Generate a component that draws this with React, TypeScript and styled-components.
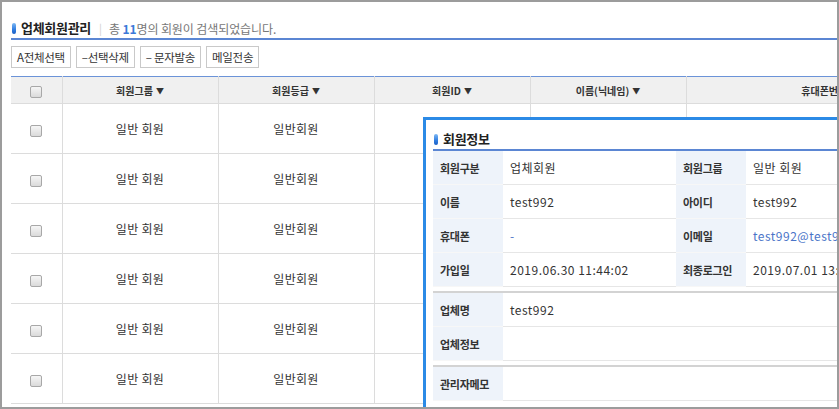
import React from "react";
import styled, { createGlobalStyle } from "styled-components";

const GlobalStyle = createGlobalStyle`
  html, body { margin: 0; padding: 0; background: #fff; }
  body { font-family: "Noto Sans CJK KR", "Noto Sans", sans-serif; color: #333; }
  * { box-sizing: border-box; }
`;

const Frame = styled.div`
  position: relative;
  width: 839px;
  height: 409px;
  border: 2px solid #9c9c9c;
  overflow: hidden;
  background: #fff;
`;

const Inner = styled.div`
  padding: 16px 0 0 9px;
`;

const TitleBar = styled.div`
  display: flex;
  align-items: center;
  height: 22px;
  border-bottom: 2px solid #5b86d3;
`;

const TitleIcon = styled.span`
  display: inline-block;
  width: 4px;
  height: 11px;
  margin: 0 5px 0 1px;
  border-radius: 2px;
  background: linear-gradient(180deg, #7db8f4 0%, #2f7ce0 60%, #1c5fc4 100%);
`;

const TitleText = styled.span<{ $size?: number }>`
  font-size: ${(p) => p.$size ?? 13}px;
  font-weight: 700;
  color: #222;
  line-height: 20px;
  letter-spacing: -0.3px;
`;

const Sep = styled.span`
  color: #cfcfcf;
  font-size: 11px;
  margin: 0 7px 0 8px;
`;

const CountText = styled.span`
  font-size: 12px;
  color: #777;
  letter-spacing: -0.1px;
`;

const Count = styled.b`
  color: #3b78d8;
`;

const ButtonRow = styled.div`
  display: flex;
  gap: 5px;
  margin-top: 6px;
`;

const ActionButton = styled.button`
  height: 22px;
  padding: 0 5px;
  border: 1px solid #c9c9c9;
  background: #fff;
  font-family: inherit;
  font-size: 11.5px;
  color: #333;
  letter-spacing: -0.3px;
  line-height: 20px;
  cursor: pointer;
`;

const Grid = styled.table`
  margin-top: 8px;
  width: 951px;
  table-layout: fixed;
  border-collapse: collapse;
  border-top: 1px solid #6b93d8;
`;

const HeadCell = styled.th<{ $w: number }>`
  width: ${(p) => p.$w}px;
  height: 27px;
  padding: 0;
  background: #f0f0f0;
  border-bottom: 1px solid #dcdcdc;
  border-left: 1px solid #dcdcdc;
  font-size: 10px;
  font-weight: 700;
  color: #333;
  text-align: center;
  white-space: nowrap;
  &:first-child { border-left: none; }
`;

const Arrow = styled.span`
  font-size: 8px;
  margin-left: 3px;
  vertical-align: 1px;
`;

const BodyCell = styled.td`
  height: 50px;
  padding: 0;
  border-bottom: 1px solid #dcdcdc;
  border-left: 1px solid #dcdcdc;
  font-size: 12px;
  color: #333;
  text-align: center;
  letter-spacing: 0.3px;
  &:first-child { border-left: none; }
`;

const Check = styled.span`
  display: inline-block;
  width: 12px;
  height: 12px;
  border: 1px solid #a8a8a8;
  border-radius: 2px;
  background: linear-gradient(180deg, #f6f6f6 0%, #dadada 100%);
  vertical-align: middle;
`;

const Popup = styled.div`
  position: absolute;
  left: 421px;
  top: 115px;
  width: 480px;
  height: 330px;
  border: 3px solid #2b8ae6;
  background: #fff;
  padding: 9px 0 0 7px;
`;

const InfoTable = styled.table<{ $sep?: boolean }>`
  width: 100%;
  table-layout: fixed;
  border-collapse: separate;
  border-spacing: 0;
  ${(p) => (p.$sep ? "margin-top: 4px; border-top: 2px solid #d3d3d3;" : "")}
`;

const LabelCell = styled.th`
  width: 70px;
  height: 34px;
  padding: 0 0 0 7px;
  background: #eef3fa;
  border-bottom: 1px solid #f7f7f7;
  font-size: 11px;
  font-weight: 700;
  color: #333;
  text-align: left;
  letter-spacing: -0.3px;
  white-space: nowrap;
`;

const ValueCell = styled.td<{ $w?: number; $link?: boolean }>`
  ${(p) => (p.$w ? `width: ${p.$w}px;` : "")}
  height: 34px;
  padding: 0 0 0 7px;
  background: #fff;
  border-bottom: 1px solid #e6e6e6;
  font-size: 12px;
  color: ${(p) => (p.$link ? "#4a74c8" : "#333")};
  white-space: nowrap;
  letter-spacing: 0.5px;
`;

const columns = [
  { w: 51, label: "" },
  { w: 156, label: "회원그룹" },
  { w: 156, label: "회원등급" },
  { w: 156, label: "회원ID" },
  { w: 156, label: "이름(닉네임)" },
  { w: 276, label: "휴대폰번호" },
];

const rows = Array.from({ length: 6 }, (_, i) => i);

export default function App() {
  return (
    <>
      <GlobalStyle />
      <Frame>
        <Inner>
          <TitleBar>
            <TitleIcon />
            <TitleText>업체회원관리</TitleText>
            <Sep>|</Sep>
            <CountText>
              총 <Count>11</Count>명의 회원이 검색되었습니다.
            </CountText>
          </TitleBar>
          <ButtonRow>
            <ActionButton>A전체선택</ActionButton>
            <ActionButton>–선택삭제</ActionButton>
            <ActionButton>– 문자발송</ActionButton>
            <ActionButton>메일전송</ActionButton>
          </ButtonRow>
          <Grid>
            <thead>
              <tr>
                {columns.map((c, i) => (
                  <HeadCell key={i} $w={c.w}>
                    {i === 0 ? (
                      <Check />
                    ) : (
                      <>
                        {c.label}
                        {i < 5 && <Arrow>▼</Arrow>}
                      </>
                    )}
                  </HeadCell>
                ))}
              </tr>
            </thead>
            <tbody>
              {rows.map((r) => (
                <tr key={r}>
                  <BodyCell>
                    <Check />
                  </BodyCell>
                  <BodyCell>일반 회원</BodyCell>
                  <BodyCell>일반회원</BodyCell>
                  <BodyCell />
                  <BodyCell />
                  <BodyCell />
                </tr>
              ))}
            </tbody>
          </Grid>
        </Inner>
        <Popup>
          <TitleBar>
            <TitleIcon />
            <TitleText $size={13}>회원정보</TitleText>
          </TitleBar>
          <InfoTable>
            <tbody>
              <tr>
                <LabelCell>회원구분</LabelCell>
                <ValueCell $w={173}>업체회원</ValueCell>
                <LabelCell>회원그룹</LabelCell>
                <ValueCell>일반 회원</ValueCell>
              </tr>
              <tr>
                <LabelCell>이름</LabelCell>
                <ValueCell $w={173}>test992</ValueCell>
                <LabelCell>아이디</LabelCell>
                <ValueCell>test992</ValueCell>
              </tr>
              <tr>
                <LabelCell>휴대폰</LabelCell>
                <ValueCell $w={173} $link>-</ValueCell>
                <LabelCell>이메일</LabelCell>
                <ValueCell $link>test992@test992.com</ValueCell>
              </tr>
              <tr>
                <LabelCell>가입일</LabelCell>
                <ValueCell $w={173}>2019.06.30 11:44:02</ValueCell>
                <LabelCell>최종로그인</LabelCell>
                <ValueCell>2019.07.01 13:20:11</ValueCell>
              </tr>
            </tbody>
          </InfoTable>
          <InfoTable $sep>
            <tbody>
              <tr>
                <LabelCell>업체명</LabelCell>
                <ValueCell>test992</ValueCell>
              </tr>
              <tr>
                <LabelCell>업체정보</LabelCell>
                <ValueCell />
              </tr>
            </tbody>
          </InfoTable>
          <InfoTable $sep>
            <tbody>
              <tr>
                <LabelCell>관리자메모</LabelCell>
                <ValueCell />
              </tr>
            </tbody>
          </InfoTable>
        </Popup>
      </Frame>
    </>
  );
}
